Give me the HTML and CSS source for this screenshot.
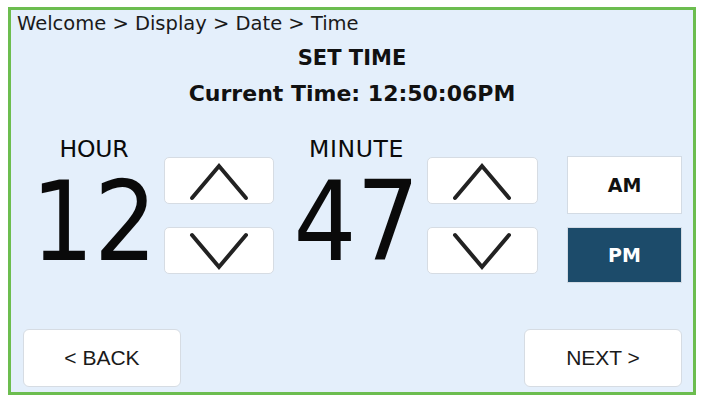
FILE: index.html
```html
<!DOCTYPE html>
<html>
<head>
<meta charset="utf-8">
<link rel="stylesheet" href="styles.css">
</head>
<body>
<div class="frame">
  <div class="crumb">Welcome &gt; Display &gt; Date &gt; Time</div>
  <div class="title">SET TIME</div>
  <div class="current">Current Time: 12:50:06PM</div>
  <div class="main">
    <div class="col col-hour">
      <div class="label">HOUR</div>
      <div class="num">12</div>
    </div>
    <div class="stepper">
      <button class="step"><svg width="110" height="47" viewBox="0 0 110 47"><polyline points="28,41 55,9 82,41" /></svg></button>
      <button class="step"><svg width="110" height="47" viewBox="0 0 110 47"><polyline points="28,8 55,40 82,8" /></svg></button>
    </div>
    <div class="col col-min">
      <div class="label">MINUTE</div>
      <div class="num">47</div>
    </div>
    <div class="stepper stepper-min">
      <button class="step"><svg width="110" height="47" viewBox="0 0 110 47"><polyline points="28,41 55,9 82,41" /></svg></button>
      <button class="step"><svg width="110" height="47" viewBox="0 0 110 47"><polyline points="28,8 55,40 82,8" /></svg></button>
    </div>
    <div class="ampm">
      <button class="am">AM</button>
      <button class="pm">PM</button>
    </div>
  </div>
  <div class="footer">
    <button class="nav">&lt; BACK</button>
    <button class="nav">NEXT &gt;</button>
  </div>
</div>
</body>
</html>
```
FILE: styles.css
```css
html, body {
  margin: 0;
  padding: 0;
  background: #ffffff;
}
body {
  width: 702px;
  height: 403px;
  overflow: hidden;
}
.frame {
  box-sizing: border-box;
  width: 688px;
  height: 388px;
  margin: 7px 0 0 8px;
  border: 3px solid #6cbd4f;
  background: #e4effb;
  display: flex;
  flex-direction: column;
}
.crumb {
  padding: 2px 0 0 6px;
  font-family: "DejaVu Sans", sans-serif;
  font-size: 19.5px;
  line-height: 24px;
  color: #1a1a1a;
  white-space: nowrap;
}
.title, .current {
  font-family: "DejaVu Sans", sans-serif;
  font-weight: bold;
  font-size: 21px;
  line-height: 28px;
  text-align: center;
  color: #111;
}
.title {
  margin-top: 8px;
}
.current {
  margin-top: 8px;
  font-size: 22px;
}
.main {
  margin-top: 29px;
  display: flex;
  align-items: flex-start;
}
.col {
  display: flex;
  flex-direction: column;
  align-items: center;
  font-family: "DejaVu Sans", sans-serif;
  color: #0a0a0a;
}
.col-hour {
  width: 132px;
  margin-left: 17px;
}
.col-min {
  width: 133px;
  margin-left: 16px;
}
.label {
  font-size: 23.5px;
  line-height: 24px;
  margin-bottom: 6px;
  letter-spacing: -0.2px;
}
.col-min .label {
  letter-spacing: 0.6px;
}
.num {
  font-family: "DejaVu Sans Condensed", "DejaVu Sans", sans-serif;
  font-size: 110px;
  line-height: 110px;
}
.stepper {
  margin-top: 20px;
  margin-left: 4px;
  display: flex;
  flex-direction: column;
  gap: 23px;
}
.step {
  width: 110px;
  height: 47px;
  padding: 0;
  margin: 0;
  background: #ffffff;
  border: 1px solid #d6dce3;
  border-radius: 5px;
  display: block;
  position: relative;
}
.step svg {
  position: absolute;
  left: -1px;
  top: -1px;
}
.step polyline {
  fill: none;
  stroke: #222222;
  stroke-width: 4;
  stroke-linecap: round;
  stroke-linejoin: miter;
}
.stepper-min .step {
  width: 111px;
}
.ampm {
  margin-top: 19px;
  margin-left: 29px;
  display: flex;
  flex-direction: column;
  gap: 13px;
}
.am, .pm {
  width: 115px;
  margin: 0;
  padding: 0;
  font-family: "DejaVu Sans", sans-serif;
  font-weight: bold;
  font-size: 19px;
  display: block;
}
.am {
  height: 58px;
  background: #ffffff;
  border: 1px solid #d3dbe4;
  color: #111;
}
.pm {
  height: 56px;
  background: #1c4b6a;
  border: 1px solid #d3dbe4;
  color: #ffffff;
}
.footer {
  margin-top: auto;
  padding: 0 11px 5px 12px;
  display: flex;
  justify-content: space-between;
}
.nav {
  width: 158px;
  height: 58px;
  margin: 0;
  padding: 0;
  background: #ffffff;
  border: 1px solid #d6dce3;
  border-radius: 6px;
  font-family: "Liberation Sans", Arial, sans-serif;
  font-size: 21px;
  color: #1a1a1a;
}
```
